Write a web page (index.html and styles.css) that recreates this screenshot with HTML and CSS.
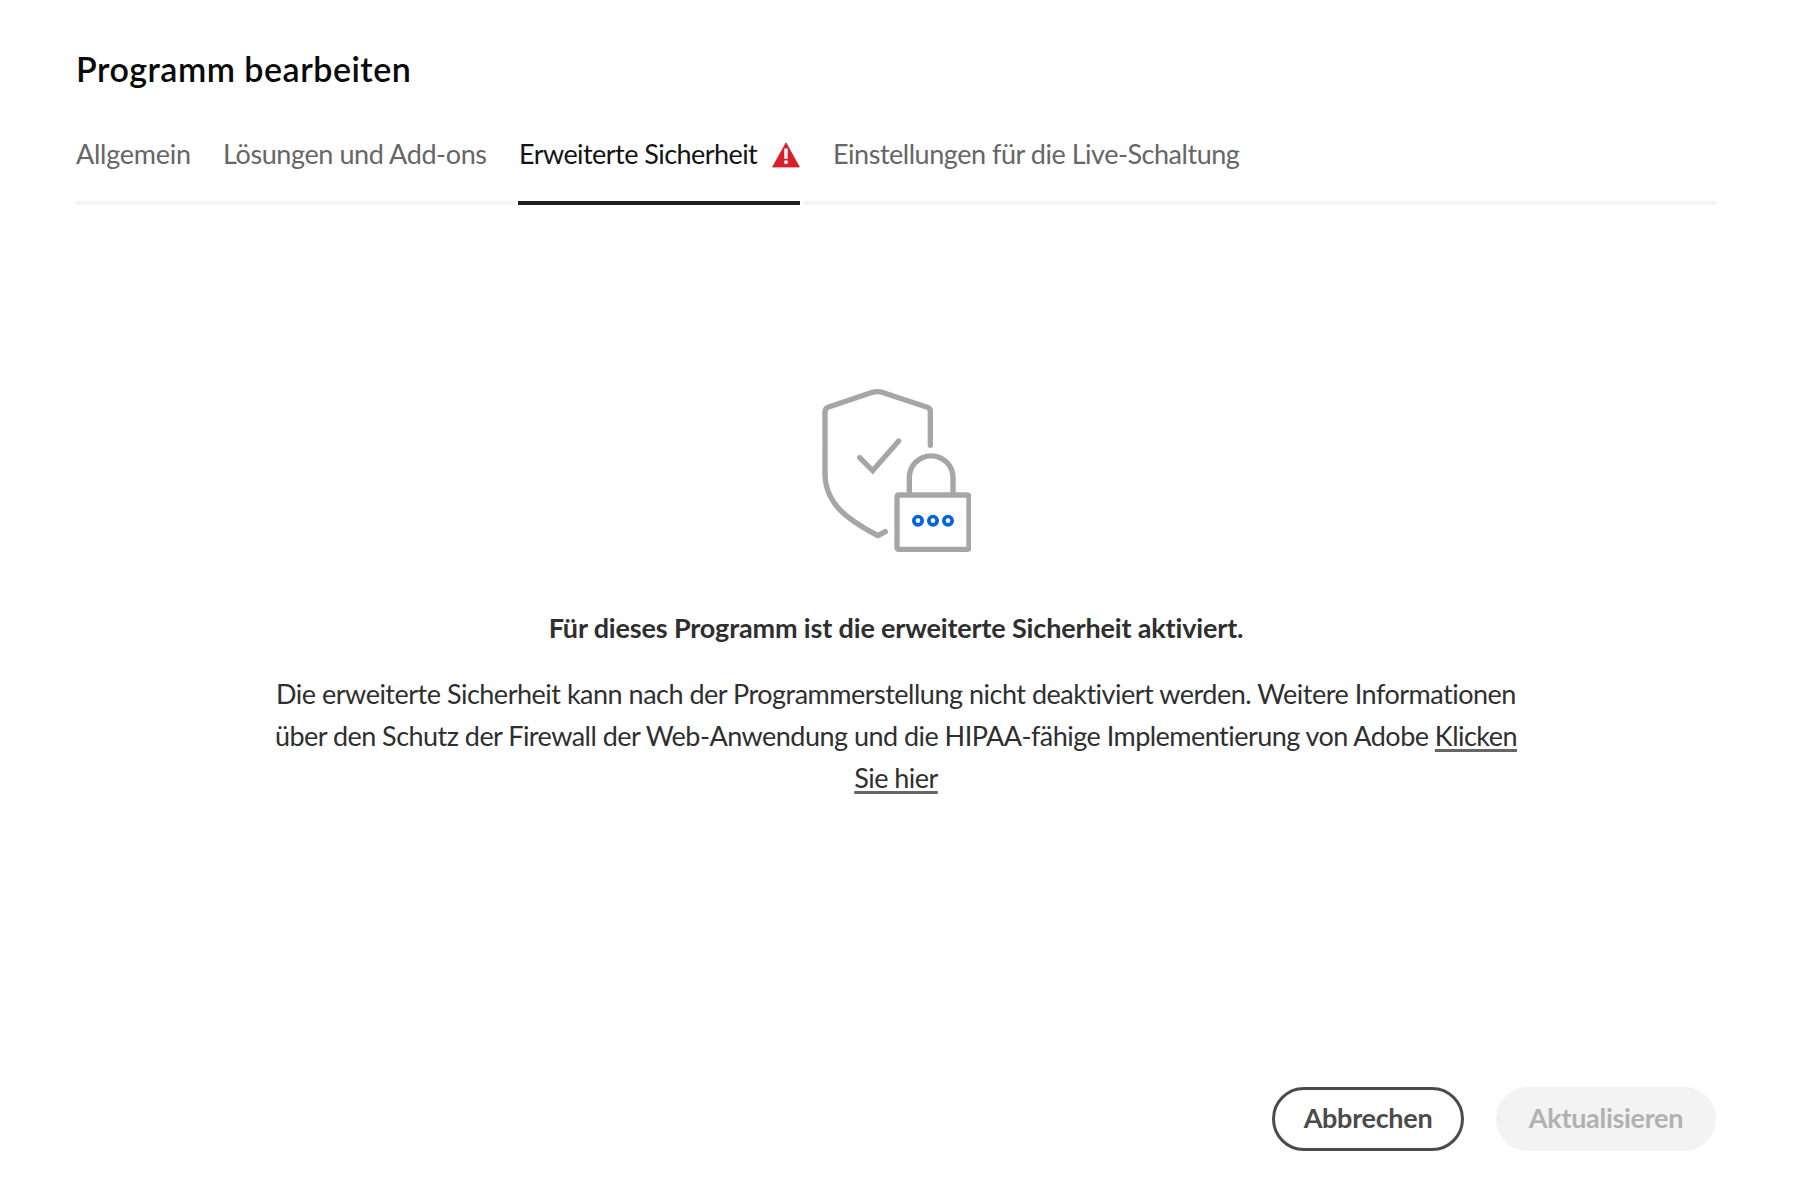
FILE: index.html
```
<!DOCTYPE html>
<html lang="de">
<head>
<meta charset="utf-8">
<title>Programm bearbeiten</title>
<link rel="stylesheet" href="styles.css">
</head>
<body>
<main class="dialog">
  <h1 class="title">Programm bearbeiten</h1>
  <nav class="tabs">
    <a class="tab tab-general">Allgemein</a>
    <a class="tab tab-solutions">Lösungen und Add-ons</a>
    <a class="tab tab-security active"><span>Erweiterte Sicherheit</span>
      <svg class="alert" viewBox="0 0 28 26" width="28" height="26">
        <path d="M14 .8 27.400 25H.6Z" fill="#d7202c" stroke="#d7202c" stroke-width=".8" stroke-linejoin="round"/>
        <path d="M12.300 6.500h3.400v10.200h-3.400zM12.300 18.600h3.400v3.200h-3.400z" fill="#fff"/>
      </svg>
    </a>
    <a class="tab tab-golive">Einstellungen für die Live-Schaltung</a>
  </nav>
  <section class="content">
    <svg class="illustration" viewBox="63 54 450 495" width="150" height="165" fill="none" stroke="#a6a6a6" stroke-width="16" stroke-linecap="round" stroke-linejoin="round">
      <path d="M391 226V124Q391 115 382 112L250 68Q234 62 217 67L86 111Q75 115 75 126V310C75 400 140 448 234 497L256 485"/>
      <path d="M179 263 218 302 296 213" stroke-linejoin="miter"/>
      <path d="M328 370V323a65.500 65.500 0 0 1 131 0V370"/>
      <rect x="291" y="375" width="216" height="163" rx="5"/>
      <g stroke="#0265dc" stroke-width="11">
        <circle cx="354" cy="452" r="12.500"/>
        <circle cx="399" cy="452" r="12.500"/>
        <circle cx="444" cy="452" r="12.500"/>
      </g>
    </svg>
    <h2 class="heading">Für dieses Programm ist die erweiterte Sicherheit aktiviert.</h2>
    <p class="description">Die erweiterte Sicherheit kann nach der Programmerstellung nicht deaktiviert werden. Weitere Informationen über den Schutz der Firewall der Web-Anwendung und die HIPAA-fähige Implementierung von Adobe <a class="link">Klicken Sie hier</a></p>
  </section>
  <footer class="actions">
    <button class="button cancel">Abbrechen</button>
    <button class="button update" disabled>Aktualisieren</button>
  </footer>
</main>
</body>
</html>
```
FILE: styles.css
```
* { box-sizing: border-box; }

body {
  margin: 0;
  background: #fff;
  color: #2f2f2f;
  font-family: Lato, "Open Sans", sans-serif;
  font-size: 27px;
  font-variant-ligatures: none;
}

.dialog {
  display: flex;
  flex-direction: column;
  height: 1182px;
  padding: 49px 78px 31px 76px;
}

.title {
  margin: 0;
  color: #0a0a0a;
  font-size: 34px;
  font-weight: 600;
  line-height: 40px;
  letter-spacing: 0.5px;
}

.tabs {
  display: flex;
  height: 116px;
  padding-top: 39px;
  background: linear-gradient(#f6f6f6, #f6f6f6) 0 bottom / 100% 4px no-repeat;
}

.tab {
  display: flex;
  height: 77px;
  color: #666;
  line-height: 52px;
  letter-spacing: -0.47px;
  white-space: nowrap;
}

.tab-general {
  width: 147px;
  letter-spacing: -0.25px;
}

.tab-solutions {
  width: 295px;
  letter-spacing: -0.4px;
}

.tab-security {
  width: 282px;
  justify-content: space-between;
  margin-right: 33px;
  padding-left: 1px;
  letter-spacing: -0.55px;
}

.active {
  color: #141414;
  border-bottom: 4px solid #1d1d1d;
  box-shadow: -2px 0 #fff, 3px 0 #fff;
}

.alert { margin-top: 14px; }

.content {
  display: flex;
  flex: 1;
  flex-direction: column;
  align-items: center;
  padding-top: 183px;
}

.heading {
  margin: 54px 0 0;
  font-size: 27px;
  font-weight: 700;
  line-height: 42px;
  letter-spacing: -0.15px;
}

.description {
  width: 1270px;
  margin: 24px 0 0;
  line-height: 42px;
  letter-spacing: -0.53px;
  text-align: center;
}

.description::first-line { letter-spacing: -0.495px; }

.link {
  text-decoration: underline;
  text-decoration-color: #666;
  text-decoration-thickness: 3px;
  text-underline-offset: 3px;
  text-decoration-skip-ink: none;
}

.actions {
  display: flex;
  justify-content: flex-end;
  gap: 32px;
}

.button {
  height: 64px;
  padding: 0 0 3px;
  border: 3px solid #4b4b4b;
  border-radius: 32px;
  background: #fff;
  color: #4b4b4b;
  font: 700 27px/55px Lato, "Open Sans", sans-serif;
  letter-spacing: -0.3px;
}

.cancel { width: 192px; }

.update {
  width: 220px;
  border-color: #f3f3f3;
  background: #f3f3f3;
  color: #b1b1b1;
}
```
